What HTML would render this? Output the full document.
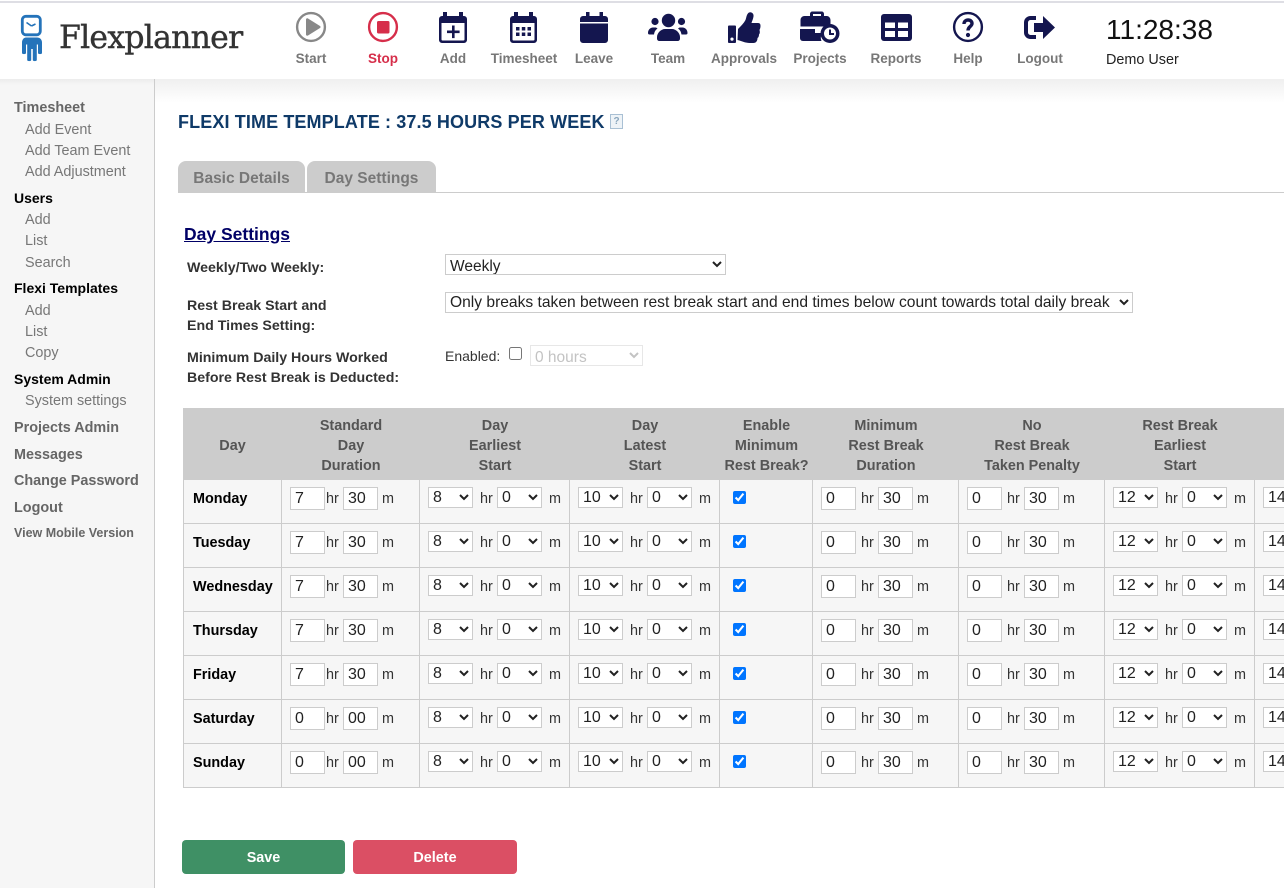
<!DOCTYPE html>
<html><head><meta charset="utf-8"><title>Flexplanner</title>
<style>
html,body{margin:0;padding:0;width:1284px;height:888px;overflow:hidden;background:#fff;font-family:"Liberation Sans",sans-serif;color:#333}
.a{position:absolute;white-space:nowrap}
#hdr{position:absolute;left:0;top:0;width:1284px;height:79px;background:#fff;border-top:0;z-index:3}
#topline{position:absolute;left:0;top:1px;width:1284px;height:2px;background:#dedee4;z-index:4}
#shadow{position:absolute;left:155px;top:79px;width:1129px;height:24px;background:linear-gradient(#efefef,#fff)}
#side{position:absolute;left:0;top:79px;width:154px;height:809px;background:#f6f6f6;border-right:1px solid #ccc}
#sideshadow{position:absolute;left:0;top:79px;width:154px;height:6px;background:linear-gradient(#ececec,#f6f6f6)}
.nl{position:absolute;z-index:5;transform:translateX(-50%);top:50px;line-height:18px;font-size:13.5px;font-weight:bold;color:#777;white-space:nowrap}
.s{position:absolute;left:14px;line-height:20px;font-size:14.4px;font-weight:bold;color:#666;white-space:nowrap;margin-top:1px}
.s.k{color:#000;font-size:14px}
.t{position:absolute;left:25px;line-height:20px;font-size:14.4px;color:#777;white-space:nowrap;margin-top:1px}
.tab{position:absolute;top:161px;height:31px;background:#ccc;border-radius:8px 8px 0 0;color:#777;font-weight:bold;font-size:15.5px;line-height:35px;text-align:center}
.lb{position:absolute;left:187px;line-height:20px;font-size:14.2px;font-weight:bold;color:#333;white-space:nowrap;margin-top:1px}
select{font-family:"Liberation Sans",sans-serif;font-size:16px;background:#fff;border:1px solid #ccc;border-radius:0;color:#222;box-sizing:border-box;margin:0}
input{margin:0}
#g{position:absolute;left:183px;top:408px;border-collapse:separate;border-spacing:0;table-layout:fixed;width:1101px}
#g th{background:#ccc;color:#555;font-size:14.4px;line-height:20px;height:72px;padding:4px 0 0;box-sizing:border-box;text-align:center;vertical-align:middle;font-weight:bold}
#g td{background:#f6f6f6;height:44px;box-sizing:border-box;border-right:1px solid #ccc;border-bottom:1px solid #ccc;vertical-align:top;padding:7px 0 0 8px;overflow:hidden}
#g td:last-child{border-right:0}
#g td:first-child{border-left:1px solid #ccc;padding:9px 0 0 9px;font-weight:bold;font-size:14.4px;line-height:20px;color:#000}
.i,.o,.hr,.hs,.m,.ms,.hw{float:left}
.i{width:35px;height:23px;box-sizing:border-box;border:1px solid #ccc;padding:0 4px;font:16px "Liberation Sans",sans-serif;color:#222;background:#fff;border-radius:0;outline:0}
.o{width:45px;height:21px;padding:0}
.hr,.m,.hs,.ms,.hw{font-size:14.4px;line-height:24px;color:#333}
.hr{width:18px;box-sizing:border-box;padding-left:1px}
.hw{width:22px;box-sizing:border-box;padding-left:5px}
.m{margin-left:4px}
.hs{width:24px;padding-left:7px;box-sizing:border-box}
.ms{margin-left:7px}
.c{float:left;width:13px;height:13px;margin:4px 0 0 5px}
.btn{position:absolute;top:840px;height:34px;border-radius:4px;color:#fff;font-weight:bold;font-size:14.4px;line-height:36px;text-align:center}
</style></head><body>
<div id="side"></div><div id="sideshadow"></div><div id="shadow"></div>
<div id="hdr"></div><div id="topline"></div>

<svg class="a" style="left:0;top:0;z-index:5" width="1284" height="79" viewBox="0 0 1284 79" xmlns="http://www.w3.org/2000/svg">
<!-- logo -->
<g fill="#2473ba" stroke="none">
<rect x="22.300" y="16.300" width="18" height="18.500" rx="3.500" fill="#fff" stroke="#2473ba" stroke-width="2.800"/>
<path d="M31.500 26l-5-3.500M31.500 26l4-2" stroke="#2473ba" stroke-width="1.600" fill="none"/>
<path d="M26 37.500h11c3 0 5 2 5 5V53c0 1.500-4 1.500-4 0V44.500h-1.200V60c0 1.500-4 1.500-4 0V49h-1.600V60c0 1.500-4 1.500-4 0V44.500H26V53c0 1.500-4 1.500-4 0V42.500c0-3 2-5 4-5z"/>
</g>
<!-- start -->
<circle cx="311" cy="27" r="13.900" fill="none" stroke="#888" stroke-width="2.400"/>
<path d="M306 19.500c0-1 1-1.500 2-1l12 7.500c.8.500.8 1.500 0 2l-12 7.500c-1 .5-2 0-2-1z" fill="#888"/>
<!-- stop -->
<circle cx="383" cy="27" r="13.900" fill="none" stroke="#d62e4a" stroke-width="2.400"/>
<rect x="377" y="21" width="12.500" height="12.500" rx="1.500" fill="#d62e4a"/>
<g fill="#14164f">
<!-- add -->
<path d="M443 12h4v4h12v-4h4v4h1a3 3 0 0 1 3 3v21a3 3 0 0 1-3 3h-22a3 3 0 0 1-3-3V19a3 3 0 0 1 3-3h1zM441.500 23v16.500a1 1 0 0 0 1 1h21a1 1 0 0 0 1-1V23z" fill-rule="evenodd"/>
<path d="M452 25.500h2.600v5h5v2.600h-5v5H452v-5h-5v-2.600h5z"/>
<!-- timesheet -->
<path d="M514 12h4v4h11v-4h4v4h1a3 3 0 0 1 3 3v21a3 3 0 0 1-3 3h-21a3 3 0 0 1-3-3V19a3 3 0 0 1 3-3h1zM512.500 23v16.500a1 1 0 0 0 1 1h20a1 1 0 0 0 1-1V23z" fill-rule="evenodd"/>
<path d="M516 27h3.500v3.500H516zM521.800 27h3.500v3.500h-3.500zM527.500 27h3.500v3.500h-3.500zM516 32.500h3.500V36H516zM521.800 32.500h3.500V36h-3.500zM527.500 32.500h3.500V36h-3.500z"/>
<!-- leave -->
<path d="M586 12h3.500v4h10v-4h3.500v4h2a3 3 0 0 1 3 3v3h-28v-3a3 3 0 0 1 3-3h3zM580 23.500h28V40a3 3 0 0 1-3 3h-22a3 3 0 0 1-3-3z"/>
<!-- team -->
<circle cx="668.500" cy="20.500" r="6.700"/>
<circle cx="655" cy="21.500" r="3.600"/><circle cx="681.500" cy="21.500" r="3.600"/>
<path d="M657 37c0-4 4-8 8-8h7c4 0 8 4 8 8v1.500c0 1.500-1 2.500-2.500 2.500h-18c-1.500 0-2.500-1-2.500-2.500z"/>
<path d="M648 33c0-3 2-5.500 5-5.500h3l1.500 1c-2 1.500-3 3-3.500 6h-4.500c-1 0-1.500-.5-1.500-1.500z"/>
<path d="M687.500 33c0-3-2-5.500-5-5.500h-3l-1.500 1c2 1.500 3 3 3.500 6h4.500c1 0 1.500-.5 1.500-1.500z"/>
<!-- approvals -->
<path d="M729 25.500h6a1 1 0 0 1 1 1V42a1 1 0 0 1-1 1h-6a1 1 0 0 1-1-1V26.500a1 1 0 0 1 1-1zM732 37.500a1.600 1.600 0 1 0 0 3.200 1.600 1.600 0 0 0 0-3.200z" fill-rule="evenodd"/>
<path d="M738 29c3-3 6-6 7.500-9 1-2.500 1-6 3.500-7.500 2.500-1 5 1 4.500 4-.3 2.500-1.500 4.500-2 6.500h6c2.500 0 3 1 3 3 0 1.500-.5 3-1 4 .5 1.500.5 3.500-.5 4.500 0 1.500-.5 3-1.500 3.500 0 3-1.500 5-4 5h-4c-4 0-8-2-12-3z"/>
<!-- projects -->
<path d="M810 16v-2c0-1.500 1-2.500 2.500-2.500h9c1.500 0 2.500 1 2.500 2.500v2h3a4 4 0 0 1 3.500 4v6.500h-30V20a4 4 0 0 1 4-4zM813 16h8v-2h-8zM800 29h15v4h7.500c-2 2.500-2 5.500-1 8h-18.500c-2 0-3-1.500-3-3z" fill-rule="evenodd"/>
<circle cx="830" cy="33.500" r="9.500"/>
</g>
<circle cx="830" cy="33.500" r="6" fill="#fff"/>
<path d="M830 29.500v4.500h4" fill="none" stroke="#14164f" stroke-width="2"/>
<!-- reports -->
<rect x="881" y="14" width="31" height="27" rx="3" fill="#14164f"/>
<path d="M885 22.500h10V28h-10zM898 22.500h10V28h-10zM885 31h10v6h-10zM898 31h10v6h-10z" fill="#fff"/>
<!-- help -->
<circle cx="968" cy="27" r="13.900" fill="none" stroke="#14164f" stroke-width="2.400"/>
<path d="M964 24c0-2.500 2-4 4-4 2.500 0 4 1.500 4 3.500 0 3-4 3-4 7" fill="none" stroke="#14164f" stroke-width="3.400"/>
<circle cx="968" cy="35" r="2.100" fill="#14164f"/>
<!-- logout -->
<path d="M1036 18h-5.500a4.500 4.500 0 0 0-4.500 4.500v10a4.500 4.500 0 0 0 4.500 4.500h5.500" fill="none" stroke="#14164f" stroke-width="4"/>
<path d="M1034 23h9v-7l12 11.500-12 11.500v-7h-9z" fill="#14164f"/>
</svg>

<div class="a" style="left:59px;top:17px;z-index:5;font:31.5px/42px 'DejaVu Serif',serif;color:#333;letter-spacing:-.75px;-webkit-text-stroke:.4px #333">Flexplanner</div>

<div class="nl" style="left:311px">Start</div>
<div class="nl" style="left:383px;color:#d62e4a">Stop</div>
<div class="nl" style="left:453px">Add</div>
<div class="nl" style="left:524px">Timesheet</div>
<div class="nl" style="left:594px">Leave</div>
<div class="nl" style="left:668px">Team</div>
<div class="nl" style="left:744px">Approvals</div>
<div class="nl" style="left:820px">Projects</div>
<div class="nl" style="left:896px">Reports</div>
<div class="nl" style="left:968px">Help</div>
<div class="nl" style="left:1040px">Logout</div>
<div class="a" style="left:1106px;top:13px;z-index:5;font-size:28px;line-height:34px;color:#111">11:28:38</div>
<div class="a" style="left:1106px;top:50px;z-index:5;font-size:14.400px;line-height:20px;color:#222">Demo User</div>

<div class="s" style="top:97px">Timesheet</div>
<div class="t" style="top:119px">Add Event</div>
<div class="t" style="top:140px">Add Team Event</div>
<div class="t" style="top:161px">Add Adjustment</div>
<div class="s k" style="top:187px">Users</div>
<div class="t" style="top:209px">Add</div>
<div class="t" style="top:230px">List</div>
<div class="t" style="top:252px">Search</div>
<div class="s k" style="top:277px">Flexi Templates</div>
<div class="t" style="top:300px">Add</div>
<div class="t" style="top:321px">List</div>
<div class="t" style="top:342px">Copy</div>
<div class="s k" style="top:368px">System Admin</div>
<div class="t" style="top:390px">System settings</div>
<div class="s" style="top:417px">Projects Admin</div>
<div class="s" style="top:444px">Messages</div>
<div class="s" style="top:470px">Change Password</div>
<div class="s" style="top:497px">Logout</div>
<div class="s" style="top:522px;font-size:12.500px">View Mobile Version</div>

<div class="a" style="left:178px;top:110px;font-size:18px;line-height:24px;font-weight:bold;color:#0f3a68;letter-spacing:.12px">FLEXI TIME TEMPLATE : 37.5 HOURS PER WEEK</div>
<div class="a" style="left:610px;top:114px;width:11px;height:13px;border:1px solid #a9c0d4;background:#eef3f7;color:#8aa6bd;font-size:10px;line-height:13px;text-align:center;font-weight:bold">?</div>

<div class="tab" style="left:178px;width:127px">Basic Details</div>
<div class="tab" style="left:307px;width:129px">Day Settings</div>
<div class="a" style="left:178px;top:192px;width:1106px;height:1px;background:#ccc"></div>

<div class="a" style="left:184px;top:223px;font-size:17.500px;line-height:22px;font-weight:bold;color:#000066;text-decoration:underline">Day Settings</div>
<div class="lb" style="top:257px">Weekly/Two Weekly:</div>
<div class="lb" style="top:295px">Rest Break Start and</div>
<div class="lb" style="top:315px">End Times Setting:</div>
<div class="lb" style="top:347px">Minimum Daily Hours Worked</div>
<div class="lb" style="top:367px">Before Rest Break is Deducted:</div>

<select class="a" style="left:445px;top:254px;width:281px;height:21px;font-size:15.500px;padding-top:2px"><option>Weekly</option></select>
<select class="a" style="left:445px;top:292px;width:688px;height:21px;font-size:15.600px"><option>Only breaks taken between rest break start and end times below count towards total daily break</option></select>
<div class="a" style="left:445px;top:346px;font-size:14px;line-height:20px;color:#333">Enabled:</div>
<input class="a" type="checkbox" style="left:509px;top:347px;width:13px;height:13px">
<select class="a" disabled style="left:530px;top:345px;width:113px;height:21px;color:#aaa;border-color:#ddd;font-size:15.500px;padding-top:2px"><option>0 hours</option></select>

<table id="g">
<colgroup><col style="width:99px"><col style="width:138px"><col style="width:150px"><col style="width:150px"><col style="width:93px"><col style="width:146px"><col style="width:146px"><col style="width:150px"><col style="width:29px"></colgroup>
<tr><th>Day</th><th>Standard<br>Day<br>Duration</th><th>Day<br>Earliest<br>Start</th><th>Day<br>Latest<br>Start</th><th>Enable<br>Minimum<br>Rest Break?</th><th>Minimum<br>Rest Break<br>Duration</th><th>No<br>Rest Break<br>Taken Penalty</th><th>Rest Break<br>Earliest<br>Start</th><th></th></tr>
<tr><td>Monday</td><td><input class="i" value="7"><span class="hr">hr</span><input class="i" value="30"><span class="m">m</span></td><td><select class="o"><option>8</option></select><span class="hs">hr</span><select class="o"><option>0</option></select><span class="ms">m</span></td><td><select class="o"><option>10</option></select><span class="hs">hr</span><select class="o"><option>0</option></select><span class="ms">m</span></td><td><input type="checkbox" class="c" checked></td><td><input class="i" value="0"><span class="hw">hr</span><input class="i" value="30"><span class="m">m</span></td><td><input class="i" value="0"><span class="hw">hr</span><input class="i" value="30"><span class="m">m</span></td><td><select class="o"><option>12</option></select><span class="hs">hr</span><select class="o"><option>0</option></select><span class="ms">m</span></td><td><select class="o"><option>14</option></select></td></tr>
<tr><td>Tuesday</td><td><input class="i" value="7"><span class="hr">hr</span><input class="i" value="30"><span class="m">m</span></td><td><select class="o"><option>8</option></select><span class="hs">hr</span><select class="o"><option>0</option></select><span class="ms">m</span></td><td><select class="o"><option>10</option></select><span class="hs">hr</span><select class="o"><option>0</option></select><span class="ms">m</span></td><td><input type="checkbox" class="c" checked></td><td><input class="i" value="0"><span class="hw">hr</span><input class="i" value="30"><span class="m">m</span></td><td><input class="i" value="0"><span class="hw">hr</span><input class="i" value="30"><span class="m">m</span></td><td><select class="o"><option>12</option></select><span class="hs">hr</span><select class="o"><option>0</option></select><span class="ms">m</span></td><td><select class="o"><option>14</option></select></td></tr>
<tr><td>Wednesday</td><td><input class="i" value="7"><span class="hr">hr</span><input class="i" value="30"><span class="m">m</span></td><td><select class="o"><option>8</option></select><span class="hs">hr</span><select class="o"><option>0</option></select><span class="ms">m</span></td><td><select class="o"><option>10</option></select><span class="hs">hr</span><select class="o"><option>0</option></select><span class="ms">m</span></td><td><input type="checkbox" class="c" checked></td><td><input class="i" value="0"><span class="hw">hr</span><input class="i" value="30"><span class="m">m</span></td><td><input class="i" value="0"><span class="hw">hr</span><input class="i" value="30"><span class="m">m</span></td><td><select class="o"><option>12</option></select><span class="hs">hr</span><select class="o"><option>0</option></select><span class="ms">m</span></td><td><select class="o"><option>14</option></select></td></tr>
<tr><td>Thursday</td><td><input class="i" value="7"><span class="hr">hr</span><input class="i" value="30"><span class="m">m</span></td><td><select class="o"><option>8</option></select><span class="hs">hr</span><select class="o"><option>0</option></select><span class="ms">m</span></td><td><select class="o"><option>10</option></select><span class="hs">hr</span><select class="o"><option>0</option></select><span class="ms">m</span></td><td><input type="checkbox" class="c" checked></td><td><input class="i" value="0"><span class="hw">hr</span><input class="i" value="30"><span class="m">m</span></td><td><input class="i" value="0"><span class="hw">hr</span><input class="i" value="30"><span class="m">m</span></td><td><select class="o"><option>12</option></select><span class="hs">hr</span><select class="o"><option>0</option></select><span class="ms">m</span></td><td><select class="o"><option>14</option></select></td></tr>
<tr><td>Friday</td><td><input class="i" value="7"><span class="hr">hr</span><input class="i" value="30"><span class="m">m</span></td><td><select class="o"><option>8</option></select><span class="hs">hr</span><select class="o"><option>0</option></select><span class="ms">m</span></td><td><select class="o"><option>10</option></select><span class="hs">hr</span><select class="o"><option>0</option></select><span class="ms">m</span></td><td><input type="checkbox" class="c" checked></td><td><input class="i" value="0"><span class="hw">hr</span><input class="i" value="30"><span class="m">m</span></td><td><input class="i" value="0"><span class="hw">hr</span><input class="i" value="30"><span class="m">m</span></td><td><select class="o"><option>12</option></select><span class="hs">hr</span><select class="o"><option>0</option></select><span class="ms">m</span></td><td><select class="o"><option>14</option></select></td></tr>
<tr><td>Saturday</td><td><input class="i" value="0"><span class="hr">hr</span><input class="i" value="00"><span class="m">m</span></td><td><select class="o"><option>8</option></select><span class="hs">hr</span><select class="o"><option>0</option></select><span class="ms">m</span></td><td><select class="o"><option>10</option></select><span class="hs">hr</span><select class="o"><option>0</option></select><span class="ms">m</span></td><td><input type="checkbox" class="c" checked></td><td><input class="i" value="0"><span class="hw">hr</span><input class="i" value="30"><span class="m">m</span></td><td><input class="i" value="0"><span class="hw">hr</span><input class="i" value="30"><span class="m">m</span></td><td><select class="o"><option>12</option></select><span class="hs">hr</span><select class="o"><option>0</option></select><span class="ms">m</span></td><td><select class="o"><option>14</option></select></td></tr>
<tr><td>Sunday</td><td><input class="i" value="0"><span class="hr">hr</span><input class="i" value="00"><span class="m">m</span></td><td><select class="o"><option>8</option></select><span class="hs">hr</span><select class="o"><option>0</option></select><span class="ms">m</span></td><td><select class="o"><option>10</option></select><span class="hs">hr</span><select class="o"><option>0</option></select><span class="ms">m</span></td><td><input type="checkbox" class="c" checked></td><td><input class="i" value="0"><span class="hw">hr</span><input class="i" value="30"><span class="m">m</span></td><td><input class="i" value="0"><span class="hw">hr</span><input class="i" value="30"><span class="m">m</span></td><td><select class="o"><option>12</option></select><span class="hs">hr</span><select class="o"><option>0</option></select><span class="ms">m</span></td><td><select class="o"><option>14</option></select></td></tr>
</table>

<div class="btn" style="left:182px;width:163px;background:#3f9065">Save</div>
<div class="btn" style="left:353px;width:164px;background:#db4f64">Delete</div>
</body></html>
